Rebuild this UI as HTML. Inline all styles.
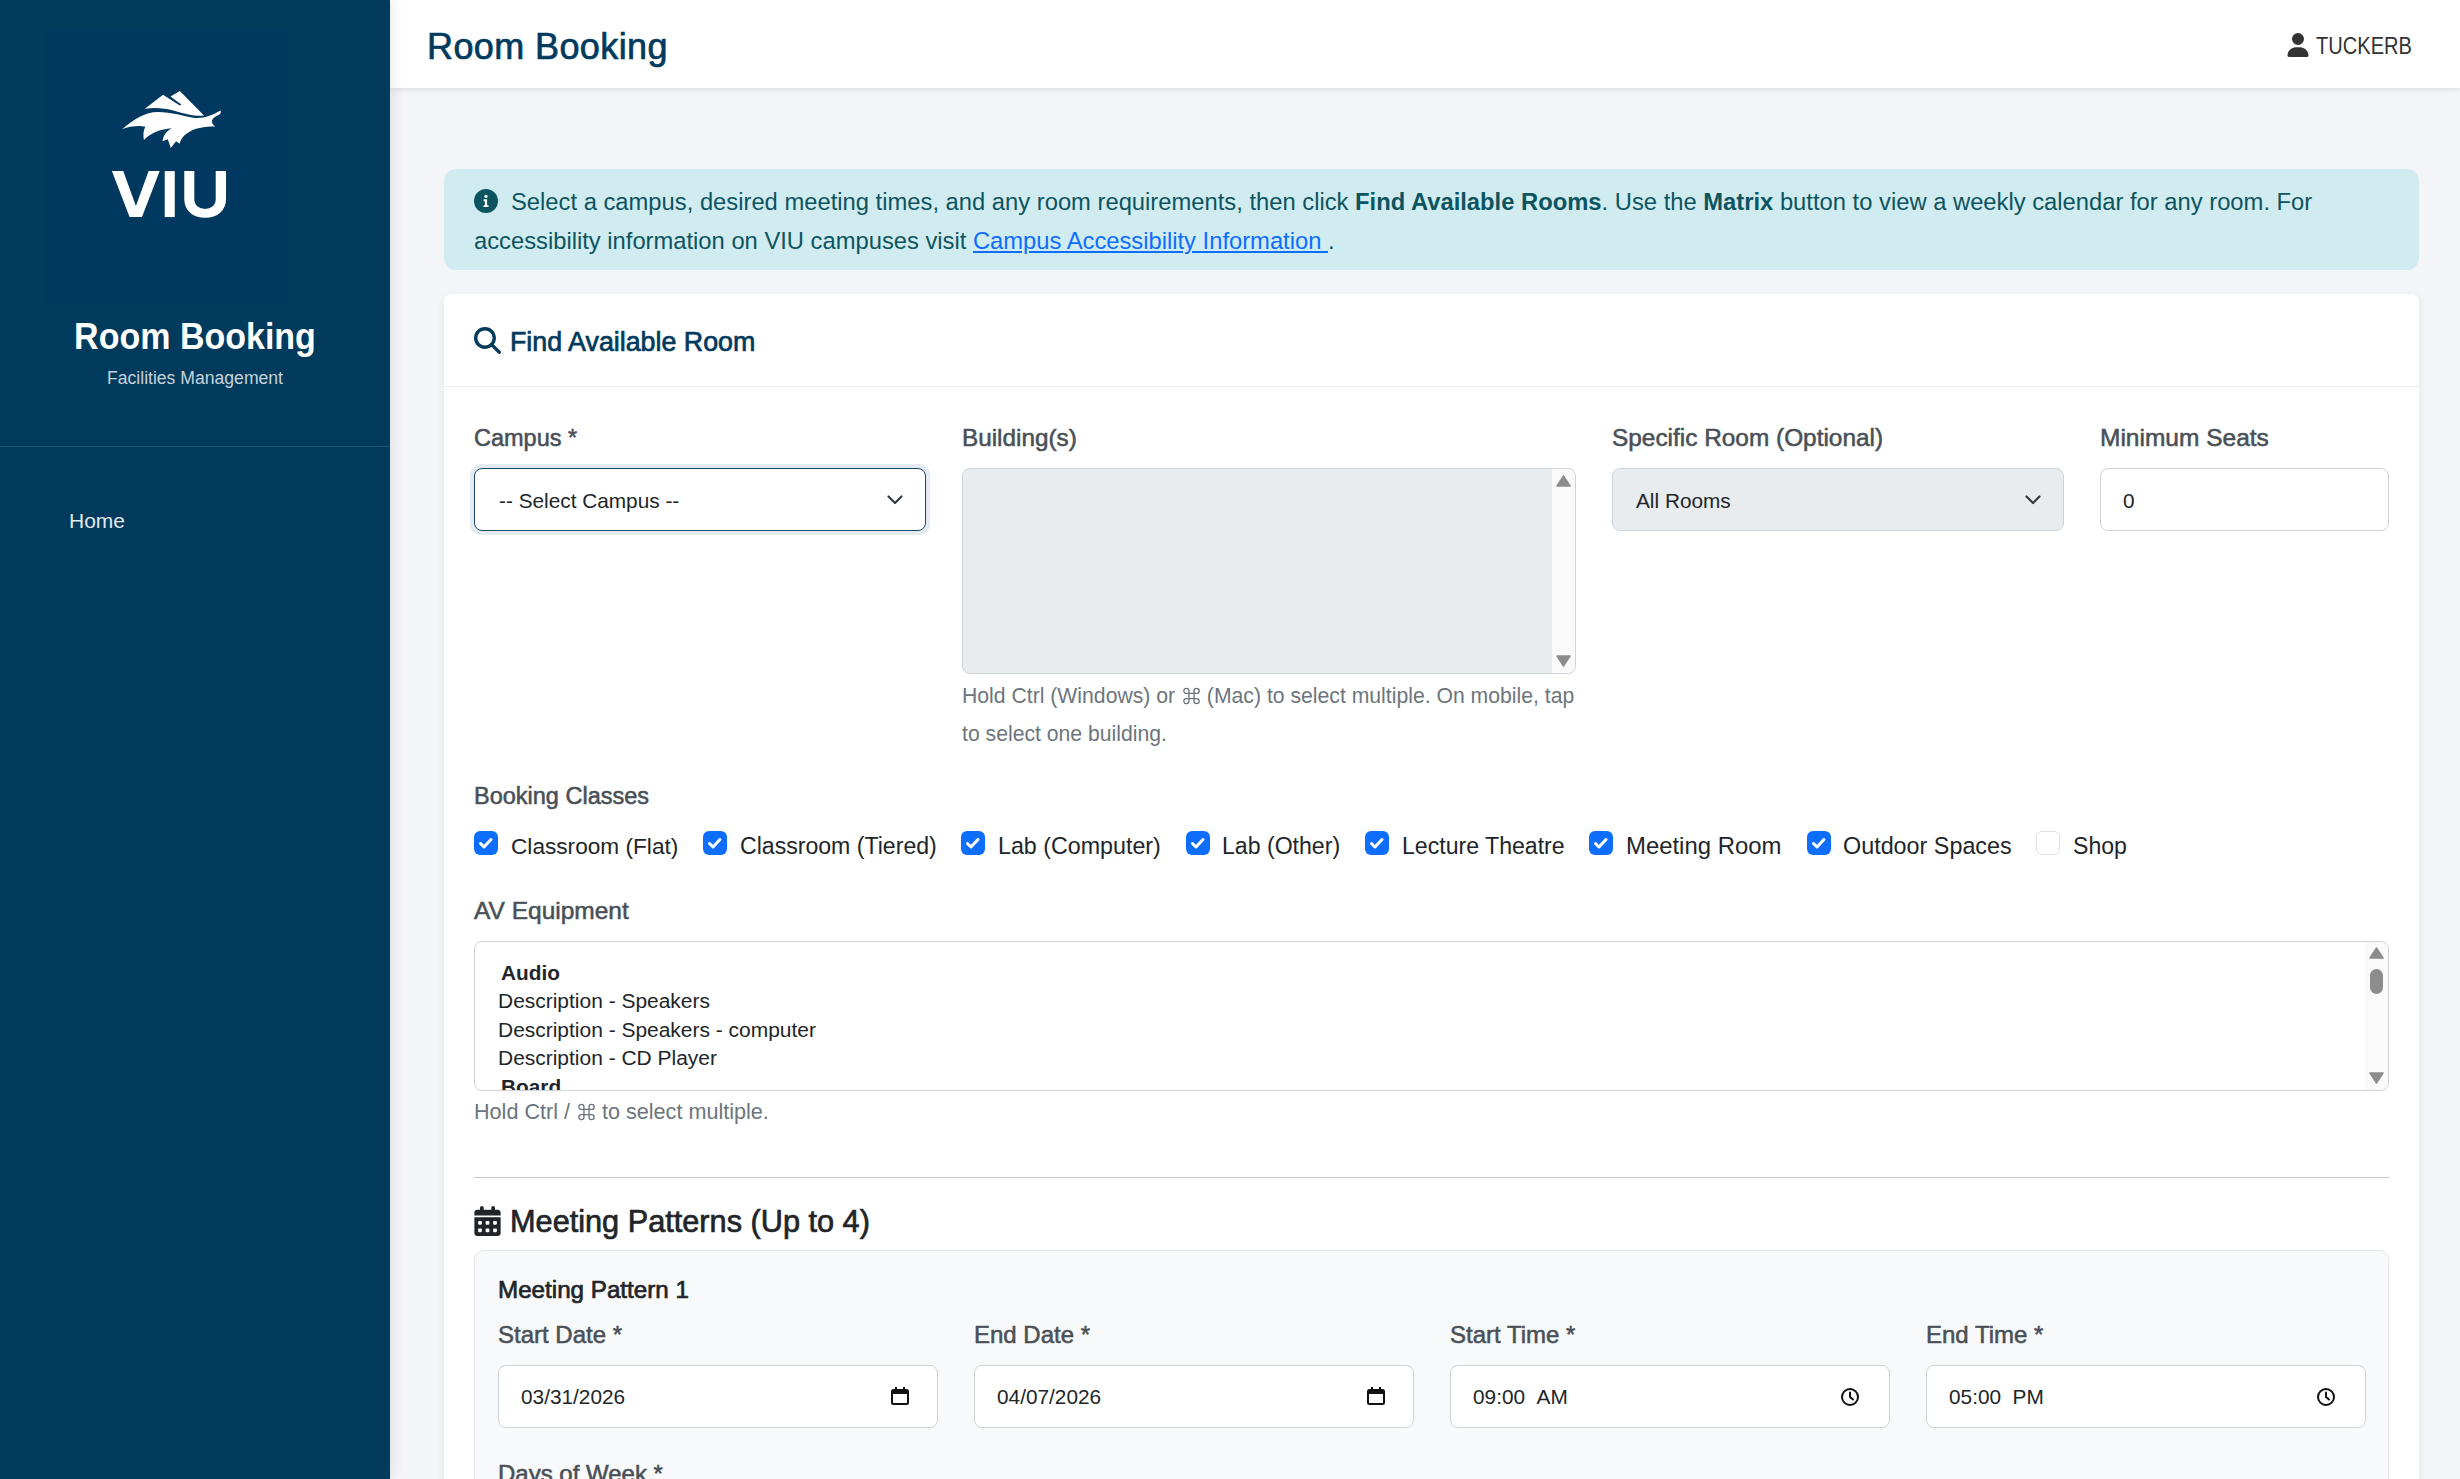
<!DOCTYPE html>
<html><head><meta charset="utf-8"><title>Room Booking</title>
<style>
*{box-sizing:border-box;margin:0;padding:0}
html,body{width:2460px;height:1479px;overflow:hidden}
body{position:relative;background:#f4f5f9;font-family:"Liberation Sans",sans-serif;color:#212529}
.a{position:absolute;white-space:nowrap}
#sb{position:absolute;left:0;top:0;width:390px;height:1479px;background:#003a5d;box-shadow:2px 0 12px rgba(0,0,0,.10);z-index:3}
#hd{position:absolute;left:390px;top:0;width:2070px;height:88px;background:#fff;box-shadow:0 2px 6px rgba(0,0,0,.09);z-index:2}
.semi{-webkit-text-stroke:0.7px currentColor}
.lbl{color:#495057;font-size:23.5px;-webkit-text-stroke:0.55px #495057}
.ctl{position:absolute;border:1.5px solid #ced4da;border-radius:8px;background:#fff}
.ctext{font-size:20.8px;color:#212529}
.help{color:#6c757d;font-size:21.2px}
.cb{position:absolute;top:831px;width:24px;height:24px;border-radius:6px;background:#0d6efd}
.cb svg{position:absolute;left:0;top:0}
.cbt{top:831px;font-size:23.1px;line-height:30px;color:#212529}
</style></head>
<body>
<div id="sb">
  <div class="a" style="left:45px;top:30px;width:245px;height:275px;background:#00385f"></div>
  <!-- logo bird -->
  <svg class="a" style="left:115px;top:85px" width="115" height="70" viewBox="0 0 2430 1479">
    <path fill="#fff" d="M630,500 L1015,205 L1370,432 L1402,412 L1172,242 L1370,125 L1880,645 C1700,670 1500,620 1250,545 C1050,485 850,470 630,500 Z"/>
    <path fill="#fff" d="M150,935 C400,720 650,570 900,570 C1200,570 1450,660 1650,690 C1850,720 2050,650 2230,540 C2250,580 2230,620 2180,640 C2050,700 1990,780 2120,880 C1800,870 1450,960 1365,1240 L1290,1190 L1180,1330 L1115,1145 L1005,1190 C1020,1050 1100,970 1200,915 C950,940 800,990 610,1160 C590,1050 600,960 640,880 C480,850 300,880 150,935 Z"/>
  </svg>
  <svg class="a" style="left:105px;top:160px" width="130" height="65" viewBox="0 0 2460 1230">
    <path fill="#fff" d="M130,210 L345,210 L585,870 L825,210 L1035,210 L700,1080 L465,1080 Z"/>
    <rect fill="#fff" x="1130" y="210" width="190" height="870"/>
    <path fill="#fff" d="M1500,210 L1690,210 L1690,740 C1690,860 1780,925 1895,925 C2010,925 2095,860 2095,740 L2095,210 L2290,210 L2290,740 C2290,960 2130,1095 1895,1095 C1660,1095 1500,960 1500,740 Z"/>
  </svg>
  <div class="a" style="left:0;width:390px;top:315px;text-align:center;font-size:34px;font-weight:bold;color:#fff;line-height:44px;transform:scaleY(1.1);transform-origin:50% 34px">Room Booking</div>
  <div class="a" style="left:0;width:390px;top:367px;text-align:center;font-size:17.6px;color:#c7d2dc;line-height:22px">Facilities Management</div>
  <div class="a" style="left:0;top:446px;width:390px;height:1px;background:rgba(255,255,255,.12)"></div>
  <div class="a" style="left:69px;top:508px;font-size:21px;color:#e3e9ee;line-height:26px">Home</div>
</div>

<div id="hd">
  <div class="a semi" style="left:37px;top:25px;font-size:36px;color:#003a5d;line-height:44px;letter-spacing:0.4px">Room Booking</div>
  <svg class="a" style="left:1897px;top:33px" width="22" height="24" viewBox="0 0 448 512"><path fill="#333" d="M224 256A128 128 0 1 0 224 0a128 128 0 1 0 0 256zm-45.7 48C79.8 304 0 383.8 0 482.3 0 498.7 13.3 512 29.7 512h388.6c16.4 0 29.7-13.3 29.7-29.7 0-98.5-79.8-178.3-178.3-178.3h-91.4z"/></svg>
  <div class="a" style="left:1926px;top:33px;font-size:20.1px;color:#333;line-height:26px;transform:scaleY(1.15);transform-origin:0 50%">TUCKERB</div>
</div>

<!-- alert -->
<div class="a" style="left:444px;top:169px;width:1975px;height:101px;background:#d1ecf1;border-radius:12px"></div>
<svg class="a" style="left:474px;top:189px" width="24" height="24" viewBox="0 0 24 24"><circle cx="12" cy="12" r="12" fill="#0c5460"/><circle cx="12" cy="7.3" r="1.6" fill="#fff"/><path fill="#fff" d="M9.6 10.3h3.5v5.9h1.4v1.9H9.5v-1.9h1.4v-4H9.6z"/></svg>
<div class="a" style="left:511px;top:182px;font-size:23.78px;line-height:39px;color:#0c5460">Select a campus, desired meeting times, and any room requirements, then click <b>Find Available Rooms</b>. Use the <b>Matrix</b> button to view a weekly calendar for any room. For</div>
<div class="a" style="left:474px;top:221px;font-size:23.76px;line-height:39px;color:#0c5460">accessibility information on VIU campuses visit <span style="color:#0d6efd;text-decoration:underline">Campus Accessibility Information </span>.</div>

<!-- card -->
<div class="a" style="left:444px;top:294px;width:1975px;height:1300px;background:#fff;border-radius:8px;box-shadow:0 2px 10px rgba(0,0,0,.06)"></div>
<div class="a" style="left:444px;top:386px;width:1975px;height:1.2px;background:#e8ebef"></div>
<svg class="a" style="left:474px;top:327px" width="27" height="27" viewBox="0 0 512 512"><path fill="#003a5d" d="M416 208c0 45.9-14.9 88.3-40 122.7L502.6 457.4c12.5 12.5 12.5 32.8 0 45.3s-32.8 12.5-45.3 0L330.7 376c-34.4 25.2-76.8 40-122.7 40C93.1 416 0 322.9 0 208S93.1 0 208 0S416 93.1 416 208zM208 352a144 144 0 1 0 0-288 144 144 0 1 0 0 288z"/></svg>
<div class="a semi" style="left:510px;top:324px;font-size:26.8px;line-height:36px;color:#003a5d">Find Available Room</div>

<!-- row 1 labels -->
<div class="a lbl" style="left:474px;top:423px;line-height:30px">Campus *</div>
<div class="a lbl" style="left:962px;top:423px;line-height:30px;font-size:24.3px">Building(s)</div>
<div class="a lbl" style="left:1612px;top:423px;line-height:30px;font-size:24.4px">Specific Room (Optional)</div>
<div class="a lbl" style="left:2100px;top:423px;line-height:30px;font-size:24.5px">Minimum Seats</div>

<!-- campus select -->
<div class="a" style="left:470px;top:464px;width:460px;height:71px;border-radius:11px;background:#e3eaf1"></div>
<div class="ctl" style="left:474px;top:468px;width:452px;height:63px;border:1.5px solid #1b4868"></div>
<div class="a ctext" style="left:499px;top:487px;line-height:28px">-- Select Campus --</div>
<svg class="a" style="left:880px;top:490px" width="30" height="20" viewBox="0 0 30 20"><path fill="none" stroke="#343a40" stroke-width="2.2" stroke-linecap="round" stroke-linejoin="round" d="M8.5 6.5L15 13L21.5 6.5"/></svg>

<!-- buildings multi select -->
<div class="ctl" style="left:962px;top:468px;width:614px;height:206px;background:#e9ecef;overflow:hidden">
  <div class="a" style="right:0;top:0;width:23px;height:204px;background:#fafafa"></div>
</div>
<svg class="a" style="left:1556px;top:475px" width="15" height="12" viewBox="0 0 15 12"><path fill="#8c8c8c" d="M7.5 1L14 11H1z" stroke="#8c8c8c" stroke-linejoin="round" stroke-width="1.5"/></svg>
<svg class="a" style="left:1556px;top:655px" width="15" height="12" viewBox="0 0 15 12"><path fill="#8c8c8c" d="M7.5 11L14 1H1z" stroke="#8c8c8c" stroke-linejoin="round" stroke-width="1.5"/></svg>
<div class="a help" style="left:962px;top:677px;line-height:38px">Hold Ctrl (Windows) or <span style="display:inline-block;width:20px;height:10px;position:relative"><svg style="position:absolute;left:1px;top:-6px" width="19" height="18" viewBox="-0.8 -0.8 17.6 17.6"><path d="M3 5.5A2.5 2.5 0 1 1 5.5 3V13A2.5 2.5 0 1 1 3 10.5H13A2.5 2.5 0 1 1 10.5 13V3A2.5 2.5 0 1 1 13 5.5Z" fill="none" stroke="#6c757d" stroke-width="1.3"/></svg></span> (Mac) to select multiple. On mobile, tap</div>
<div class="a help" style="left:962px;top:715px;line-height:38px">to select one building.</div>

<!-- specific room -->
<div class="ctl" style="left:1612px;top:468px;width:452px;height:63px;background:#e9ecef"></div>
<div class="a ctext" style="left:1636px;top:487px;line-height:28px">All Rooms</div>
<svg class="a" style="left:2018px;top:490px" width="30" height="20" viewBox="0 0 30 20"><path fill="none" stroke="#343a40" stroke-width="2.2" stroke-linecap="round" stroke-linejoin="round" d="M8.5 6.5L15 13L21.5 6.5"/></svg>

<!-- min seats -->
<div class="ctl" style="left:2100px;top:468px;width:289px;height:63px"></div>
<div class="a ctext" style="left:2123px;top:487px;line-height:28px">0</div>

<!-- booking classes -->
<div class="a lbl" style="left:474px;top:781px;line-height:30px">Booking Classes</div>

<div class="cb" style="left:474px"><svg width="24" height="24" viewBox="0 0 24 24"><path d="M6.5 12.5l3.5 3.5 7-7.5" fill="none" stroke="#fff" stroke-width="3" stroke-linecap="round" stroke-linejoin="round"/></svg></div>
<div class="a cbt" style="left:511px;font-size:22.65px">Classroom (Flat)</div>
<div class="cb" style="left:703px"><svg width="24" height="24" viewBox="0 0 24 24"><path d="M6.5 12.5l3.5 3.5 7-7.5" fill="none" stroke="#fff" stroke-width="3" stroke-linecap="round" stroke-linejoin="round"/></svg></div>
<div class="a cbt" style="left:740px">Classroom (Tiered)</div>
<div class="cb" style="left:961px"><svg width="24" height="24" viewBox="0 0 24 24"><path d="M6.5 12.5l3.5 3.5 7-7.5" fill="none" stroke="#fff" stroke-width="3" stroke-linecap="round" stroke-linejoin="round"/></svg></div>
<div class="a cbt" style="left:998px;font-size:23.25px">Lab (Computer)</div>
<div class="cb" style="left:1186px"><svg width="24" height="24" viewBox="0 0 24 24"><path d="M6.5 12.5l3.5 3.5 7-7.5" fill="none" stroke="#fff" stroke-width="3" stroke-linecap="round" stroke-linejoin="round"/></svg></div>
<div class="a cbt" style="left:1222px">Lab (Other)</div>
<div class="cb" style="left:1365px"><svg width="24" height="24" viewBox="0 0 24 24"><path d="M6.5 12.5l3.5 3.5 7-7.5" fill="none" stroke="#fff" stroke-width="3" stroke-linecap="round" stroke-linejoin="round"/></svg></div>
<div class="a cbt" style="left:1402px">Lecture Theatre</div>
<div class="cb" style="left:1589px"><svg width="24" height="24" viewBox="0 0 24 24"><path d="M6.5 12.5l3.5 3.5 7-7.5" fill="none" stroke="#fff" stroke-width="3" stroke-linecap="round" stroke-linejoin="round"/></svg></div>
<div class="a cbt" style="left:1626px;font-size:23.9px">Meeting Room</div>
<div class="cb" style="left:1807px"><svg width="24" height="24" viewBox="0 0 24 24"><path d="M6.5 12.5l3.5 3.5 7-7.5" fill="none" stroke="#fff" stroke-width="3" stroke-linecap="round" stroke-linejoin="round"/></svg></div>
<div class="a cbt" style="left:1843px;font-size:23.35px">Outdoor Spaces</div>
<div class="cb" style="left:2036px;background:#fff;border:1.5px solid #dee2e6"></div>
<div class="a cbt" style="left:2073px">Shop</div>

<!-- AV equipment -->
<div class="a lbl" style="left:474px;top:896px;line-height:30px;font-size:24.5px">AV Equipment</div>
<div class="ctl" style="left:474px;top:941px;width:1915px;height:150px;overflow:hidden">
  <div class="a" style="right:0;top:0;width:23px;height:148px;background:#fafafa"></div>
  <div class="a" style="left:26px;top:17px;font-size:20.8px;font-weight:bold;line-height:28.4px;color:#212529">Audio</div>
  <div class="a" style="left:23px;top:45.4px;font-size:20.96px;line-height:28.4px;color:#212529">Description - Speakers</div>
  <div class="a" style="left:23px;top:73.8px;font-size:20.96px;line-height:28.4px;color:#212529">Description - Speakers - computer</div>
  <div class="a" style="left:23px;top:102.2px;font-size:20.96px;line-height:28.4px;color:#212529">Description - CD Player</div>
  <div class="a" style="left:26px;top:130.6px;font-size:20.8px;font-weight:bold;line-height:28.4px;color:#212529">Board</div>
</div>
<svg class="a" style="left:2369px;top:947px" width="15" height="12" viewBox="0 0 15 12"><path fill="#8c8c8c" d="M7.5 1L14 11H1z" stroke="#8c8c8c" stroke-linejoin="round" stroke-width="1.5"/></svg>
<div class="a" style="left:2370px;top:969px;width:13px;height:25px;border-radius:7px;background:#8c8c8c"></div>
<svg class="a" style="left:2369px;top:1072px" width="15" height="12" viewBox="0 0 15 12"><path fill="#8c8c8c" d="M7.5 11L14 1H1z" stroke="#8c8c8c" stroke-linejoin="round" stroke-width="1.5"/></svg>
<div class="a help" style="left:474px;top:1094px;line-height:36px;font-size:21.6px">Hold Ctrl / <span style="display:inline-block;width:20px;height:10px;position:relative"><svg style="position:absolute;left:1px;top:-6px" width="19" height="18" viewBox="-0.8 -0.8 17.6 17.6"><path d="M3 5.5A2.5 2.5 0 1 1 5.5 3V13A2.5 2.5 0 1 1 3 10.5H13A2.5 2.5 0 1 1 10.5 13V3A2.5 2.5 0 1 1 13 5.5Z" fill="none" stroke="#6c757d" stroke-width="1.3"/></svg></span> to select multiple.</div>

<!-- hr -->
<div class="a" style="left:474px;top:1176.5px;width:1915px;height:1.2px;background:#c6c8cb"></div>

<!-- meeting patterns -->
<svg class="a" style="left:474px;top:1206px" width="27" height="30" viewBox="0 0 448 512"><path fill="#212529" d="M128 0c17.7 0 32 14.3 32 32V64H288V32c0-17.7 14.3-32 32-32s32 14.3 32 32V64h48c26.5 0 48 21.5 48 48v48H0V112C0 85.5 21.5 64 48 64H96V32c0-17.7 14.3-32 32-32zM0 192H448V464c0 26.5-21.5 48-48 48H48c-26.5 0-48-21.5-48-48V192zm64 80v32c0 8.8 7.2 16 16 16h32c8.8 0 16-7.2 16-16V272c0-8.8-7.2-16-16-16H80c-8.8 0-16 7.2-16 16zm128 0v32c0 8.8 7.2 16 16 16h32c8.8 0 16-7.2 16-16V272c0-8.8-7.2-16-16-16H208c-8.8 0-16 7.2-16 16zm144-16c-8.8 0-16 7.2-16 16v32c0 8.8 7.2 16 16 16h32c8.8 0 16-7.2 16-16V272c0-8.8-7.2-16-16-16H336zM64 400v32c0 8.8 7.2 16 16 16h32c8.8 0 16-7.2 16-16V400c0-8.8-7.2-16-16-16H80c-8.8 0-16 7.2-16 16zm144-16c-8.8 0-16 7.2-16 16v32c0 8.8 7.2 16 16 16h32c8.8 0 16-7.2 16-16V400c0-8.8-7.2-16-16-16H208zm112 16v32c0 8.8 7.2 16 16 16h32c8.8 0 16-7.2 16-16V400c0-8.8-7.2-16-16-16H336c-8.8 0-16 7.2-16 16z"/></svg>
<div class="a semi" style="left:510px;top:1202px;font-size:30.7px;line-height:40px;color:#212529">Meeting Patterns (Up to 4)</div>

<div class="a" style="left:474px;top:1250px;width:1915px;height:400px;background:#f8f9fa;border:1.5px solid #e3e6ea;border-radius:10px"></div>
<div class="a semi" style="left:498px;top:1275px;font-size:24.2px;line-height:30px;color:#212529">Meeting Pattern 1</div>

<div class="a lbl" style="left:498px;top:1320px;line-height:30px;font-size:24px">Start Date *</div>
<div class="a lbl" style="left:974px;top:1320px;line-height:30px;font-size:24px">End Date *</div>
<div class="a lbl" style="left:1450px;top:1320px;line-height:30px;font-size:24px">Start Time *</div>
<div class="a lbl" style="left:1926px;top:1320px;line-height:30px;font-size:24px">End Time *</div>

<div class="ctl" style="left:498px;top:1365px;width:440px;height:63px"></div>
<div class="a ctext" style="left:521px;top:1383px;line-height:28px">03/31/2026</div>
<svg class="a" style="left:891px;top:1387px" width="18" height="18" viewBox="0 0 18 18"><rect x="1" y="3" width="16" height="14" rx="1.5" fill="none" stroke="#111" stroke-width="2"/><rect x="1" y="3" width="16" height="4" fill="#111"/><rect x="4" y="0" width="2" height="4" fill="#111"/><rect x="12" y="0" width="2" height="4" fill="#111"/></svg>
<div class="ctl" style="left:974px;top:1365px;width:440px;height:63px"></div>
<div class="a ctext" style="left:997px;top:1383px;line-height:28px">04/07/2026</div>
<svg class="a" style="left:1367px;top:1387px" width="18" height="18" viewBox="0 0 18 18"><rect x="1" y="3" width="16" height="14" rx="1.5" fill="none" stroke="#111" stroke-width="2"/><rect x="1" y="3" width="16" height="4" fill="#111"/><rect x="4" y="0" width="2" height="4" fill="#111"/><rect x="12" y="0" width="2" height="4" fill="#111"/></svg>
<div class="ctl" style="left:1450px;top:1365px;width:440px;height:63px"></div>
<div class="a ctext" style="left:1473px;top:1383px;line-height:28px">09:00&nbsp;&nbsp;AM</div>
<svg class="a" style="left:1840px;top:1387px" width="20" height="20" viewBox="0 0 20 20"><circle cx="10" cy="10" r="8" fill="none" stroke="#111" stroke-width="2"/><path d="M10 5.5V10l3 2.5" fill="none" stroke="#111" stroke-width="2" stroke-linecap="round"/></svg>
<div class="ctl" style="left:1926px;top:1365px;width:440px;height:63px"></div>
<div class="a ctext" style="left:1949px;top:1383px;line-height:28px">05:00&nbsp;&nbsp;PM</div>
<svg class="a" style="left:2316px;top:1387px" width="20" height="20" viewBox="0 0 20 20"><circle cx="10" cy="10" r="8" fill="none" stroke="#111" stroke-width="2"/><path d="M10 5.5V10l3 2.5" fill="none" stroke="#111" stroke-width="2" stroke-linecap="round"/></svg>

<div class="a lbl" style="left:498px;top:1458.5px;line-height:30px;font-size:24px">Days of Week *</div>

</body></html>
